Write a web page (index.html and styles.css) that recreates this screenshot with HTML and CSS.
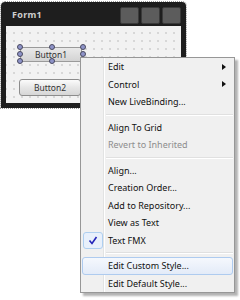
FILE: index.html
```html
<!DOCTYPE html>
<html>
<head>
<meta charset="utf-8" />
<title>Form1</title>
<link rel="stylesheet" href="styles.css">
</head>
<body>
<div class="form">
    <div class="caption">
        <span class="title">Form1</span>
        <div class="caps">
            <span class="cap"></span>
            <span class="cap"></span>
            <span class="cap"></span>
        </div>
    </div>
    <div class="client">
        <div class="btn sel">
            Button1
            <i class="h h1"></i><i class="h h2"></i><i class="h h3"></i>
            <i class="h h4"></i><i class="h h5"></i>
            <i class="h h6"></i><i class="h h7"></i><i class="h h8"></i>
        </div>
        <div class="btn b2">Button2</div>
    </div>
</div>

<div class="menu">
    <div class="item"><span class="ico"></span><span class="txt">Edit</span><span class="arrow"></span></div>
    <div class="item"><span class="ico"></span><span class="txt">Control</span><span class="arrow"></span></div>
    <div class="item"><span class="ico"></span><span class="txt">New LiveBinding...</span></div>
    <div class="sep"></div>
    <div class="item"><span class="ico"></span><span class="txt">Align To Grid</span></div>
    <div class="item off"><span class="ico"></span><span class="txt">Revert to Inherited</span></div>
    <div class="sep"></div>
    <div class="item"><span class="ico"></span><span class="txt">Align...</span></div>
    <div class="item"><span class="ico"></span><span class="txt">Creation Order...</span></div>
    <div class="item"><span class="ico"></span><span class="txt">Add to Repository...</span></div>
    <div class="item"><span class="ico"></span><span class="txt">View as Text</span></div>
    <div class="item"><span class="ico check"><svg width="10" height="9" viewBox="0 0 10 9"><path d="M1.5 4.5 L4 7.5 L8.5 1" fill="none" stroke="#2323b8" stroke-width="1.6"/></svg></span><span class="txt">Text FMX</span></div>
    <div class="sep"></div>
    <div class="item hot"><span class="ico"></span><span class="txt">Edit Custom Style...</span></div>
    <div class="item"><span class="ico"></span><span class="txt">Edit Default Style...</span></div>
</div>
</body>
</html>
```

FILE: styles.css
```css
*{ margin:0; padding:0; box-sizing:border-box;}
body{ width:240px; height:300px; background:#fff; font-family:"Noto Sans","DejaVu Sans",sans-serif; position:relative; overflow:hidden;}

/* form designer */
.form{ width:185px; height:106px; margin:2px 0 0 1px; background:#1e1e1e; border-radius:4px 4px 0 0; padding:0 5px 5px 5px; outline:1px dotted #9a9a9a; display:flex; flex-direction:column;}
.caption{ height:24px; display:flex; align-items:center; padding-left:6px;}
.title{ color:#cfcfcf; font-size:9px; font-weight:bold; letter-spacing:0.3px; flex:1; padding-top:1px;}
.caps{ display:flex; gap:2px; align-self:flex-start; margin-top:5px;}
.cap{ width:19px; height:17px; background:#5c5c5c; border:1px solid #3a3a3a; border-radius:2px;}
.client{ flex:1; background-color:#f2f2f2; background-image:radial-gradient(circle, #c9c9c9 0.6px, transparent 0.9px); background-size:8px 8px; background-position:4px 3px; padding:21px 0 0 14px;}

.btn{ width:62px; height:16px; border:1px solid #8c8c8c; border-radius:3px; background:linear-gradient(#fbfbfb,#e6e6e6 50%,#d6d6d6); font-size:8.5px; color:#333; display:flex; align-items:center; justify-content:center; position:relative;}
.sel{ height:15px; border-color:#9a9a9a; border-radius:0; background:linear-gradient(#e9e9e9,#d3d3d3);}
.b2{ margin:17px 0 0 -1px; height:17px;}

.h{ position:absolute; width:6px; height:6px; border-radius:50%; background:#8e93c9; border:1px solid #4a4a60;}
.h1{ left:-4px; top:-4px;}
.h2{ left:28px; top:-4px;}
.h3{ left:59px; top:-4px;}
.h4{ left:-4px; top:3px;}
.h5{ left:59px; top:3px;}
.h6{ left:-4px; top:10px;}
.h7{ left:28px; top:10px;}
.h8{ left:59px; top:10px;}

/* popup menu */
.menu{ position:absolute; left:80px; top:57px; width:155px; height:236px; border:1px solid #979797; padding:0 1px; background-color:#f0f0f0;
    background-image:linear-gradient(to right, transparent 22px, #e2e3e3 22px, #e2e3e3 23px, #fff 23px, #fff 24px, transparent 24px);
    box-shadow:3px 3px 2px rgba(0,0,0,0.3); font-size:9px; color:#111;}
.item{ height:17.5px; display:flex; align-items:center; border:1px solid transparent; border-radius:3px;}
.ico{ width:20px; height:17px; flex:none; display:flex; align-items:center; justify-content:center;}
.txt{ margin-left:5px; flex:1;}
.off{ color:#8d8d8d;}
.arrow{ width:0; height:0; border-left:4px solid #111; border-top:3.5px solid transparent; border-bottom:3.5px solid transparent; margin-right:6px;}
.check{ border:1px solid #aecff0; border-radius:3px; background:#e8f0fb;}
.hot{ border-color:#aecbef; background:linear-gradient(#f5f8fd,#e3ebf8);}
.sep{ height:2px; margin:3px 0 3px 24px; border-top:1px solid #e0e0e0; border-bottom:1px solid #fff;}
```
